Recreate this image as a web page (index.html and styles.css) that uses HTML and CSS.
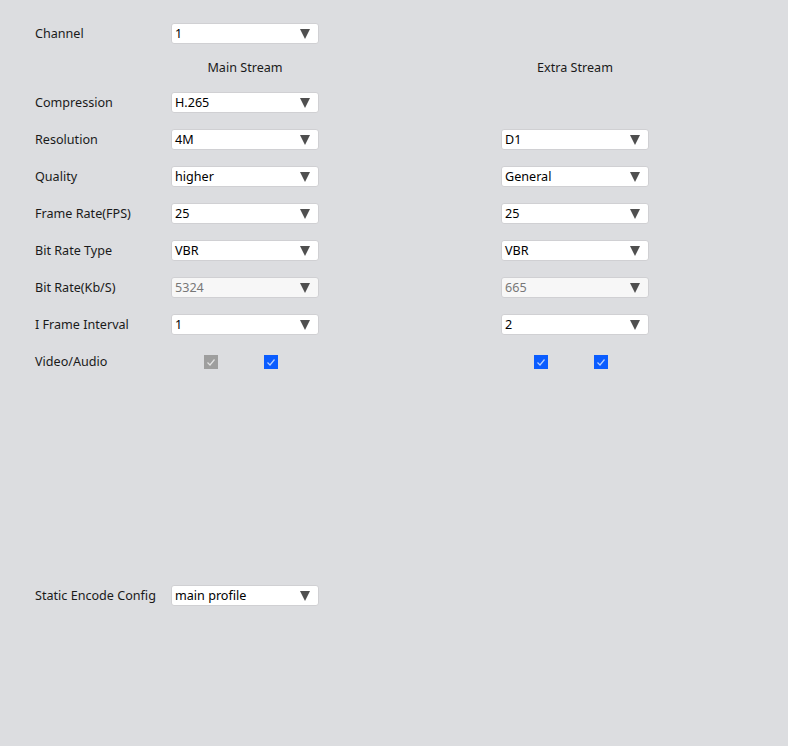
FILE: index.html
```html
<!DOCTYPE html>
<html lang="en">
<head>
  <meta charset="UTF-8" />
  <title>Encode Settings</title>
  <link rel="stylesheet" href="styles.css">
</head>
<body>
  <div class="encode-form">
    <!-- Channel -->
    <div class="label">Channel</div>
    <div class="select"><span>1</span><i class="arrow"></i></div>
    <div></div>
    <div></div>

    <!-- Stream headers -->
    <div></div>
    <div class="stream-title">Main Stream</div>
    <div></div>
    <div class="stream-title">Extra Stream</div>

    <div class="label">Compression</div>
    <div class="select"><span>H.265</span><i class="arrow"></i></div>
    <div></div>
    <div></div>

    <div class="label">Resolution</div>
    <div class="select"><span>4M</span><i class="arrow"></i></div>
    <div></div>
    <div class="select"><span>D1</span><i class="arrow"></i></div>

    <div class="label">Quality</div>
    <div class="select"><span>higher</span><i class="arrow"></i></div>
    <div></div>
    <div class="select"><span>General</span><i class="arrow"></i></div>

    <div class="label">Frame Rate(FPS)</div>
    <div class="select"><span>25</span><i class="arrow"></i></div>
    <div></div>
    <div class="select"><span>25</span><i class="arrow"></i></div>

    <div class="label">Bit Rate Type</div>
    <div class="select"><span>VBR</span><i class="arrow"></i></div>
    <div></div>
    <div class="select"><span>VBR</span><i class="arrow"></i></div>

    <div class="label">Bit Rate(Kb/S)</div>
    <div class="select disabled"><span>5324</span><i class="arrow"></i></div>
    <div></div>
    <div class="select disabled"><span>665</span><i class="arrow"></i></div>

    <div class="label">I Frame Interval</div>
    <div class="select"><span>1</span><i class="arrow"></i></div>
    <div></div>
    <div class="select"><span>2</span><i class="arrow"></i></div>

    <div class="label">Video/Audio</div>
    <div class="checks">
      <span class="check grey"><svg viewBox="0 0 14 14"><polyline points="3.5,7.5 6,10 10.5,4.5"/></svg></span>
      <span class="check"><svg viewBox="0 0 14 14"><polyline points="3.5,7.5 6,10 10.5,4.5"/></svg></span>
    </div>
    <div></div>
    <div class="checks">
      <span class="check"><svg viewBox="0 0 14 14"><polyline points="3.5,7.5 6,10 10.5,4.5"/></svg></span>
      <span class="check"><svg viewBox="0 0 14 14"><polyline points="3.5,7.5 6,10 10.5,4.5"/></svg></span>
    </div>
  </div>

  <div class="encode-form static-row">
    <div class="label">Static Encode Config</div>
    <div class="select"><span>main profile</span><i class="arrow"></i></div>
  </div>
</body>
</html>
```

FILE: styles.css
```css
body {
  margin: 0;
  min-height: 746px;
  background-color: #dcdde0;
  font-family: 'Noto Sans', 'Open Sans', sans-serif;
  font-size: 12.6px;
  color: #1a1a1a;
}

.encode-form {
  display: grid;
  grid-template-columns: 136px 148px 182px 148px;
  grid-template-rows: 21px 16px;
  grid-auto-rows: 21px;
  row-gap: 16px;
  padding: 23px 0 0 35px;
  align-items: center;
}

.label {
  white-space: nowrap;
}

.stream-title {
  text-align: center;
  line-height: 16px;
}

.select {
  box-sizing: border-box;
  height: 21px;
  display: flex;
  align-items: center;
  justify-content: space-between;
  padding: 0 8px 0 3px;
  background-color: #fff;
  border: 1px solid #d0d0d3;
  border-radius: 3px;
  color: #000;
}

.select.disabled {
  background-color: #f7f7f7;
  color: #777;
}

.arrow {
  width: 0;
  height: 0;
  border-left: 5px solid transparent;
  border-right: 5px solid transparent;
  border-top: 10px solid #4f4f4f;
}

.checks {
  display: flex;
  gap: 46px;
  padding-left: 33px;
}

.check {
  width: 14px;
  height: 14px;
  background-color: #0a5cff;
  display: block;
}

.check.grey {
  background-color: #9e9e9e;
}

.check svg {
  width: 14px;
  height: 14px;
  display: block;
}

.check polyline {
  fill: none;
  stroke: rgba(255, 255, 255, 0.7);
  stroke-width: 1.2;
}

.static-row {
  grid-template-rows: 21px;
  padding-top: 213px;
}
```
